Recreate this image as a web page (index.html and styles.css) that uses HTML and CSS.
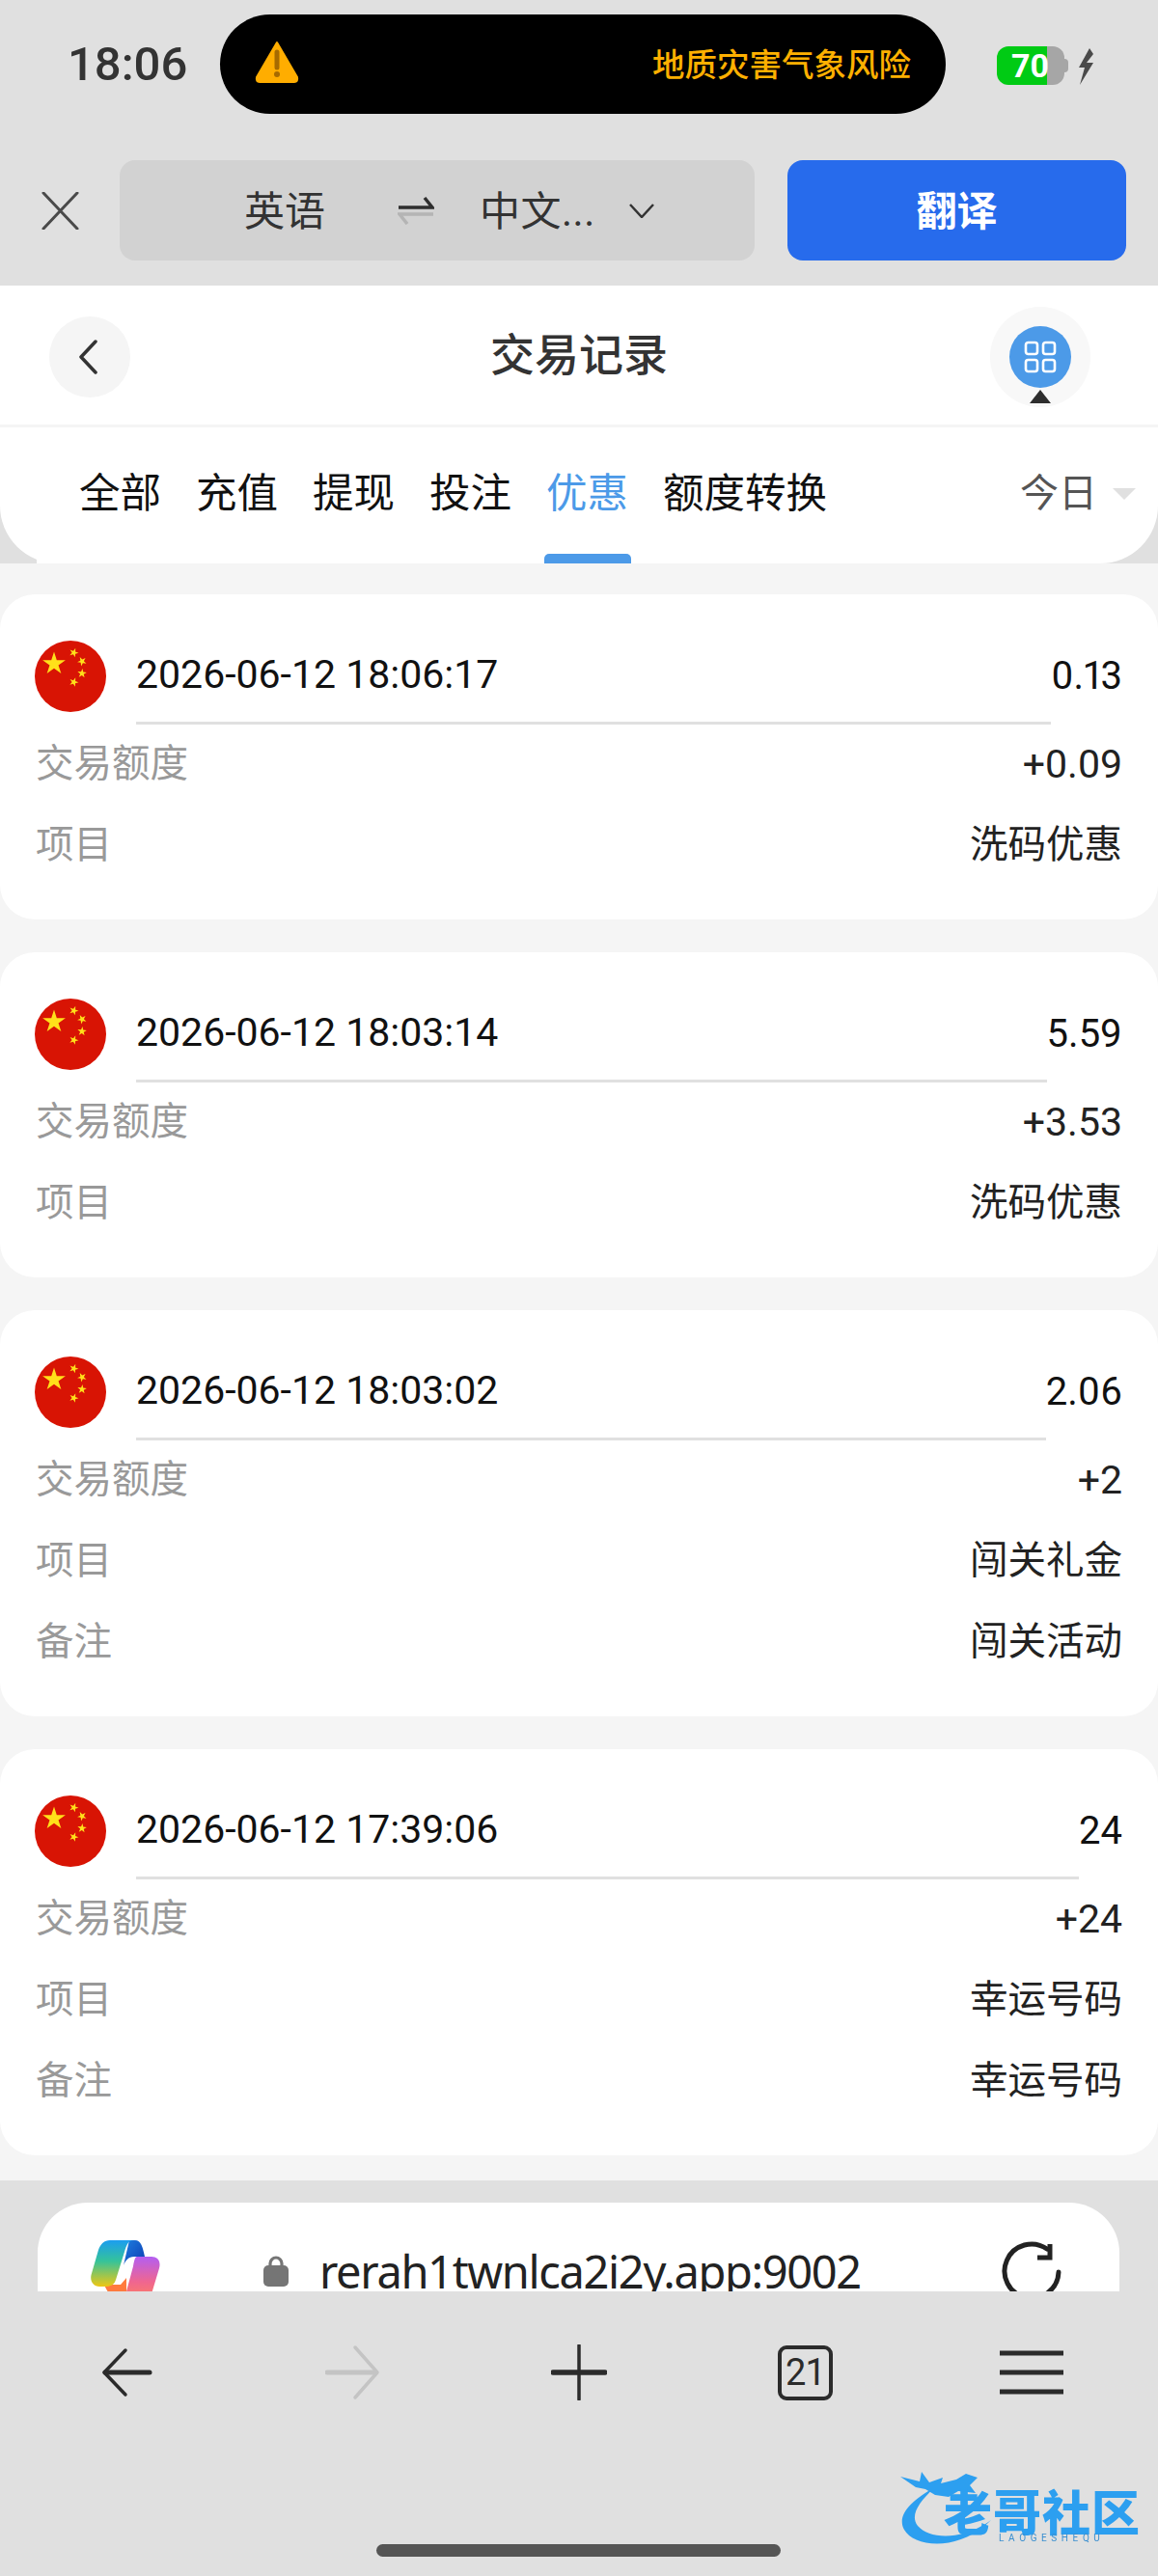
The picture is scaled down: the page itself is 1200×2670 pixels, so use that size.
FILE: index.html
```html
<!DOCTYPE html>
<html lang="zh-CN">
<head>
    <meta charset="UTF-8" />
    <meta name="viewport" content="width=device-width, initial-scale=1.0"/>
    <title>交易记录</title>
    <link rel="stylesheet" href="styles.css">
</head>
<body>
    <svg class="defs" width="0" height="0" aria-hidden="true">
        <defs>
            <polygon id="star" points="0,-1 .2245,-.309 .951,-.309 .363,.118 .588,.809 0,.382 -.588,.809 -.363,.118 -.951,-.309 -.2245,-.309"/>
            <symbol id="flag" viewBox="0 0 74 74">
                <circle cx="37" cy="37" r="37" fill="#d81404"/>
                <use href="#star" fill="#ffe01a" transform="translate(20 24) scale(12.5)"/>
                <use href="#star" fill="#ffe01a" transform="translate(40.5 12.5) rotate(20) scale(5)"/>
                <use href="#star" fill="#ffe01a" transform="translate(49 21.5) rotate(45) scale(5)"/>
                <use href="#star" fill="#ffe01a" transform="translate(49 34) rotate(5) scale(5)"/>
                <use href="#star" fill="#ffe01a" transform="translate(40.5 43) rotate(20) scale(5)"/>
            </symbol>
            <linearGradient id="cp-left" x1="0" y1="0" x2="0" y2="1">
                <stop offset="0" stop-color="#1b9df0"/>
                <stop offset=".45" stop-color="#35c39a"/>
                <stop offset="1" stop-color="#eec714"/>
            </linearGradient>
            <linearGradient id="cp-top" x1="0" y1="0" x2="1" y2="1">
                <stop offset="0" stop-color="#1f7fe0"/>
                <stop offset="1" stop-color="#0b3bb2"/>
            </linearGradient>
            <linearGradient id="cp-right" x1="0" y1="0" x2="0" y2="1">
                <stop offset="0" stop-color="#b35ef2"/>
                <stop offset=".55" stop-color="#f0668f"/>
                <stop offset="1" stop-color="#ff8458"/>
            </linearGradient>
        </defs>
    </svg>

    <!-- STATUS BAR -->
    <div class="status">
        <span class="status-time">18:06</span>
        <div class="island">
            <svg class="island-icon" viewBox="0 0 48 44">
                <path d="M24 2 L45 38 Q46 43 42 43 H6 Q2 43 3 38 Z" fill="#ffad00" stroke="#ffad00" stroke-width="2" stroke-linejoin="round"/>
                <path d="M24 12 V28" stroke="#a66a00" stroke-width="5" stroke-linecap="round"/>
                <circle cx="24" cy="35" r="3" fill="#a66a00"/>
            </svg>
            <span class="island-text">地质灾害气象风险</span>
        </div>
        <div class="battery">
            <span class="battery-level">70</span>
        </div>
        <svg class="bolt" viewBox="0 0 18 38">
            <path d="M13 0 L2 20 H8 L3 38 L17 15 H10 L17 6 Z" fill="#4a4a4a"/>
        </svg>
    </div>

    <!-- TRANSLATE BAR -->
    <div class="translate">
        <svg class="translate-close" viewBox="0 0 39 39">
            <path d="M2 1 L37 38 M37 1 L2 38" stroke="#4a4a4a" stroke-width="3" stroke-linecap="round"/>
        </svg>
        <div class="lang-box">
            <span class="lang-from">英语</span>
            <svg class="lang-swap" viewBox="0 0 38 30">
                <path d="M1 12 H36 L28 2" fill="none" stroke="#2e2e2e" stroke-width="3.5"/>
                <path d="M37 19 H2 L10 29" fill="none" stroke="#b4b4b4" stroke-width="3.5"/>
            </svg>
            <span class="lang-to">中文...</span>
            <svg class="lang-arrow" viewBox="0 0 26 15">
                <path d="M1 1 L13 14 L25 1" fill="none" stroke="#333" stroke-width="2.5"/>
            </svg>
        </div>
        <button class="translate-btn">翻译</button>
    </div>

    <!-- PAGE HEADER -->
    <div class="page-head">
        <div class="back-btn">
            <svg viewBox="0 0 22 36" width="22" height="36">
                <path d="M19 2 L4 18 L19 34" fill="none" stroke="#333" stroke-width="3.5" stroke-linecap="round" stroke-linejoin="round"/>
            </svg>
        </div>
        <h1 class="page-title">交易记录</h1>
        <div class="menu-btn">
            <div class="menu-dot">
                <svg viewBox="0 0 34 34" width="34" height="34">
                    <rect x="2" y="2" width="12" height="12" rx="2.5" fill="none" stroke="#fff" stroke-width="2.6"/>
                    <rect x="20" y="2" width="12" height="12" rx="2.5" fill="none" stroke="#fff" stroke-width="2.6"/>
                    <rect x="2" y="20" width="12" height="12" rx="2.5" fill="none" stroke="#fff" stroke-width="2.6"/>
                    <rect x="20" y="20" width="12" height="12" rx="2.5" fill="none" stroke="#fff" stroke-width="2.6"/>
                </svg>
            </div>
            <span class="menu-caret"></span>
        </div>
    </div>

    <!-- TABS -->
    <div class="tabs">
        <span class="tab">全部</span>
        <span class="tab">充值</span>
        <span class="tab">提现</span>
        <span class="tab">投注</span>
        <span class="tab tab-active">优惠</span>
        <span class="tab">额度转换</span>
        <span class="tab-date">今日</span>
        <span class="tab-caret"></span>
    </div>

    <!-- RECORD LIST -->
    <div class="list">
        <div class="card">
            <div class="card-top">
                <svg class="flag"><use href="#flag"/></svg>
                <div class="card-date">2026-06-12 18:06:17</div>
                <div class="card-total">0.13</div>
            </div>
            <div class="row"><span class="row-label">交易额度</span><span class="row-amount">+0.09</span></div>
            <div class="row"><span class="row-label">项目</span><span class="row-value">洗码优惠</span></div>
        </div>
        <div class="card">
            <div class="card-top">
                <svg class="flag"><use href="#flag"/></svg>
                <div class="card-date">2026-06-12 18:03:14</div>
                <div class="card-total">5.59</div>
            </div>
            <div class="row"><span class="row-label">交易额度</span><span class="row-amount">+3.53</span></div>
            <div class="row"><span class="row-label">项目</span><span class="row-value">洗码优惠</span></div>
        </div>
        <div class="card">
            <div class="card-top">
                <svg class="flag"><use href="#flag"/></svg>
                <div class="card-date">2026-06-12 18:03:02</div>
                <div class="card-total">2.06</div>
            </div>
            <div class="row"><span class="row-label">交易额度</span><span class="row-amount">+2</span></div>
            <div class="row"><span class="row-label">项目</span><span class="row-value">闯关礼金</span></div>
            <div class="row"><span class="row-label">备注</span><span class="row-value">闯关活动</span></div>
        </div>
        <div class="card">
            <div class="card-top">
                <svg class="flag"><use href="#flag"/></svg>
                <div class="card-date">2026-06-12 17:39:06</div>
                <div class="card-total">24</div>
            </div>
            <div class="row"><span class="row-label">交易额度</span><span class="row-amount">+24</span></div>
            <div class="row"><span class="row-label">项目</span><span class="row-value">幸运号码</span></div>
            <div class="row"><span class="row-label">备注</span><span class="row-value">幸运号码</span></div>
        </div>
    </div>

    <!-- BROWSER BAR -->
    <div class="browser">
        <div class="url-bar">
            <svg class="copilot" viewBox="0 0 72 66">
                <path d="M14 47 H31 L37 40 V58 H24 C19 58 16 52 14 47 Z" fill="#ff7a3e"/>
                <path d="M40 1 H46 C52 1 54 8 56 18 H45 C39 18 36 22 34 27 Z" fill="url(#cp-top)"/>
                <path d="M20 1 H44 C39 1 37 6 35 13 L26 42 C24 48 20 49 14 49 H9 C3 49 -1 44 .5 37 L8 11 C10 5 14 1 20 1 Z" fill="url(#cp-left)"/>
                <path d="M48 18 H63 C69 18 73 22 71 30 L62 60 C61 64 56 66 50 66 H28 C33 66 35 60 37 54 L44 28 C45 22 46 18 48 18 Z" fill="url(#cp-right)"/>
            </svg>
            <svg class="lock" viewBox="0 0 26 32">
                <path d="M7 13 V8 A6 6 0 0 1 19 8 V13" fill="none" stroke="#757575" stroke-width="3.2"/>
                <rect x="0" y="10" width="26" height="22" rx="5" fill="#757575"/>
            </svg>
            <span class="url-text">rerah1twnlca2i2y.app:9002</span>
            <svg class="reload" viewBox="0 0 64 64">
                <path d="M59 32 A28 28 0 1 1 47 8" fill="none" stroke="#222" stroke-width="5" stroke-linecap="round"/>
                <path d="M50 3 V17 H37" fill="none" stroke="#222" stroke-width="5"/>
            </svg>
        </div>
        <div class="toolbar">
            <svg viewBox="0 0 58 58" width="58" height="58">
                <path d="M28 6 L6 29 L28 52" fill="none" stroke="#2b2b2b" stroke-width="3.5" stroke-linecap="round" stroke-linejoin="round"/>
                <path d="M7 29 H53" stroke="#2b2b2b" stroke-width="5" stroke-linecap="round"/>
            </svg>
            <svg viewBox="0 0 58 58" width="58" height="58">
                <path d="M31 3 L54 29 L31 55" fill="none" stroke="#c4c4c4" stroke-width="3.5" stroke-linecap="round" stroke-linejoin="round"/>
                <path d="M2 29 H52" stroke="#c4c4c4" stroke-width="5" stroke-linecap="round"/>
            </svg>
            <svg viewBox="0 0 58 58" width="58" height="58">
                <path d="M29 1 V57" stroke="#2b2b2b" stroke-width="3.5" stroke-linecap="round"/>
                <path d="M2 29 H56" stroke="#2b2b2b" stroke-width="5.5" stroke-linecap="round"/>
            </svg>
            <div class="tab-count">21</div>
            <svg viewBox="0 0 66 46" width="66" height="46">
                <path d="M0 3 H66 M0 23 H66 M0 43 H66" stroke="#2b2b2b" stroke-width="5"/>
            </svg>
        </div>
        <div class="home-bar"></div>
        <div class="watermark">
            <svg class="watermark-dragon" viewBox="0 0 130 90">
                <path d="M36 20 C10 34 -4 50 4 64 C14 82 60 88 94 54 C64 76 30 74 18 60 C10 50 18 36 36 20 Z" fill="#2c9ff0"/>
                <path d="M0 9 L20 14 L22 4 L30 15 L44 10 L42 16 L58 12 L68 6 L80 10 L72 18 L78 26 L60 24 L50 30 L36 28 L26 22 L16 20 Z" fill="#2c9ff0"/>
            </svg>
            <span class="watermark-name">老哥社区</span>
            <span class="watermark-sub">LAOGESHEQU</span>
        </div>
    </div>
</body>
</html>
```

FILE: styles.css
```css
* {
    margin: 0;
    padding: 0;
    box-sizing: border-box;
}

body {
    width: 1200px;
    height: 2670px;
    overflow: hidden;
    display: flex;
    flex-direction: column;
    background: #e0e0e0;
    color: #333;
    font-family: Roboto, "Noto Sans CJK SC", sans-serif;
}

.defs {
    position: absolute;
}

/* status bar */
.status {
    height: 166px;
    padding: 15px 0 0 70px;
    display: flex;
    align-items: flex-start;
}

.status-time {
    width: 158px;
    line-height: 103px;
    font-size: 49px;
    font-weight: 500;
    color: #333;
}

.island {
    width: 752px;
    height: 103px;
    padding: 0 36px 0 35px;
    border-radius: 52px;
    background: #000;
    display: flex;
    align-items: center;
    justify-content: space-between;
}

.island-icon {
    width: 48px;
    height: 44px;
    margin-top: -6px;
}

.island-text {
    margin-top: -4px;
    font-size: 33.5px;
    font-weight: 500;
    color: #ffb000;
}

.battery {
    position: relative;
    width: 70px;
    height: 40px;
    margin: 33px 0 0 53px;
    border-radius: 12px;
    background: linear-gradient(90deg, #00cb14 52px, #a6a6a6 52px);
    padding-left: 15px;
    color: #fff;
    font-size: 34px;
    font-weight: 700;
    line-height: 40px;
}

.battery::after {
    content: "";
    position: absolute;
    top: 13px;
    right: -4px;
    width: 4px;
    height: 14px;
    border-radius: 0 4px 4px 0;
    background: #a6a6a6;
}

.bolt {
    width: 18px;
    height: 38px;
    margin: 35px 0 0 13px;
}

/* translate bar */
.translate {
    height: 130px;
    padding: 0 33px 26px 43px;
    display: flex;
    align-items: center;
}

.translate-close {
    width: 39px;
    height: 39px;
}

.lang-box {
    width: 658px;
    height: 104px;
    margin: 0 34px 0 42px;
    padding-left: 129px;
    border-radius: 16px;
    background: #d2d2d2;
    display: flex;
    align-items: center;
    font-size: 42px;
    color: #333;
}

.lang-from {
    margin-top: -6px;
}

.lang-swap {
    width: 38px;
    height: 30px;
    margin: 0 47px 0 75px;
}

.lang-to {
    width: 155px;
    margin-top: -6px;
    letter-spacing: .5px;
}

.lang-arrow {
    width: 26px;
    height: 15px;
}

.translate-btn {
    width: 351px;
    height: 104px;
    padding-bottom: 6px;
    border: none;
    border-radius: 16px;
    background: #276bec;
    color: #fff;
    font-family: inherit;
    font-size: 42px;
    font-weight: 700;
}

/* page header */
.page-head {
    position: relative;
    height: 147px;
    background: #fff;
    border-bottom: 3px solid #f5f5f5;
    padding: 0 70px 0 51px;
    display: flex;
    align-items: center;
    justify-content: space-between;
}

.back-btn {
    width: 84px;
    height: 84px;
    margin-top: 4px;
    border-radius: 50%;
    background: #f5f5f5;
    display: flex;
    align-items: center;
    justify-content: center;
    padding-right: 4px;
}

.page-title {
    font-size: 46px;
    font-weight: 500;
    color: #333;
    margin: -9px 0 0 39px;
}

.menu-btn {
    position: relative;
    width: 104px;
    height: 104px;
    margin-top: 4px;
    border-radius: 50%;
    background: #f8f8f8;
    display: flex;
    align-items: center;
    justify-content: center;
}

.menu-dot {
    width: 64px;
    height: 64px;
    border-radius: 50%;
    background: #4c9ae8;
    display: flex;
    align-items: center;
    justify-content: center;
}

.menu-caret {
    position: absolute;
    left: 41px;
    top: 86px;
    border-left: 11px solid transparent;
    border-right: 11px solid transparent;
    border-bottom: 14px solid #2e2e2e;
}

/* tabs */
.tabs {
    position: relative;
    height: 141px;
    padding: 39px 23px 0 82px;
    background: #fff;
    border-radius: 0 0 60px 60px;
    display: flex;
    align-items: flex-start;
    gap: 36px;
    font-size: 42.5px;
    line-height: 60px;
    color: #111;
}

/* the bottom edge runs flat from x=38 on the left */
.tabs::before {
    content: "";
    position: absolute;
    left: 38px;
    bottom: 0;
    width: 40px;
    height: 30px;
    background: #fff;
}

.tab {
    position: relative;
}

.tab-active {
    color: #4c9ae8;
}

.tab-active::after {
    content: "";
    position: absolute;
    left: -2px;
    right: -3px;
    top: 92px;
    height: 10px;
    border-radius: 5px 5px 0 0;
    background: #4c9ae8;
}

.tab-date {
    margin-left: auto;
    color: #555;
    font-size: 40px;
}

.tab-caret {
    margin: 24px 0 0 -20px;
    border-left: 12px solid transparent;
    border-right: 12px solid transparent;
    border-top: 12px solid #e0e0e0;
}

/* record list */
.list {
    height: 1676px;
    padding-top: 32px;
    background: #f5f5f5;
    display: flex;
    flex-direction: column;
    gap: 34px;
}

.card {
    padding: 48px 37px 34px 36px;
    border-radius: 36px;
    background: #fff;
}

.card-top {
    display: flex;
    align-items: flex-start;
}

.flag {
    width: 74px;
    height: 74px;
    margin-right: 31px;
    flex-shrink: 0;
}

.card-date {
    flex: 1;
    height: 87px;
    border-bottom: 3px solid #e0e0e0;
    font-size: 41px;
    line-height: 70px;
    color: #111;
}

.card-total {
    line-height: 74px;
    font-size: 40px;
    font-variant-numeric: proportional-nums;
    color: #111;
}

.row {
    height: 84px;
    padding-left: 1px;
    display: flex;
    align-items: center;
    justify-content: space-between;
    font-size: 39.5px;
}

.row-label {
    margin-top: -11px;
    color: #999;
}

.row-value {
    margin-top: -11px;
    color: #222;
}

.row-amount {
    margin-top: -3px;
    font-size: 41px;
    color: #222;
}

/* browser bar */
.browser {
    position: relative;
    flex: 1;
    padding-top: 23px;
}

.url-bar {
    width: 1121px;
    height: 92px;
    margin-left: 39px;
    border-radius: 52px 52px 0 0;
    background: #fff;
    overflow: hidden;
    display: flex;
    align-items: flex-start;
}

.copilot {
    width: 72px;
    height: 66px;
    margin: 38px 0 0 55px;
    flex-shrink: 0;
}

.lock {
    width: 26px;
    height: 32px;
    margin: 55px 0 0 107px;
    flex-shrink: 0;
}

.url-text {
    margin: 39px 0 0 32px;
    font-family: "Noto Sans", sans-serif;
    font-size: 47px;
    line-height: 64px;
    letter-spacing: -1.35px;
    color: #222;
    white-space: nowrap;
}

.reload {
    width: 64px;
    height: 64px;
    margin: 40px 58px 0 auto;
    flex-shrink: 0;
}

.toolbar {
    height: 72px;
    margin-top: 48px;
    padding: 0 14px;
    display: grid;
    grid-template-columns: repeat(5, 1fr);
    justify-items: center;
    align-items: center;
}

.tab-count {
    width: 57px;
    height: 57px;
    border: 4px solid #2b2b2b;
    border-radius: 9px;
    text-align: center;
    font-size: 38px;
    line-height: 49px;
    letter-spacing: -1px;
    color: #2b2b2b;
}

.home-bar {
    width: 419px;
    height: 13px;
    margin: 142px 0 0 390px;
    border-radius: 7px;
    background: #555;
}

.watermark {
    position: absolute;
    left: 933px;
    top: 298px;
    width: 250px;
    height: 84px;
    color: #2c9ff0;
    filter: blur(.7px);
}

.watermark-dragon {
    position: absolute;
    left: 0;
    top: 0;
    width: 130px;
    height: 90px;
}

.watermark-name {
    position: absolute;
    left: 45px;
    top: 28px;
    font-size: 50px;
    font-weight: 900;
    line-height: 40px;
    letter-spacing: 1px;
    white-space: nowrap;
}

.watermark-sub {
    position: absolute;
    left: 102px;
    top: 68px;
    font-size: 10px;
    line-height: 10px;
    letter-spacing: 4.6px;
    white-space: nowrap;
    color: #3a8fd0;
}
```
